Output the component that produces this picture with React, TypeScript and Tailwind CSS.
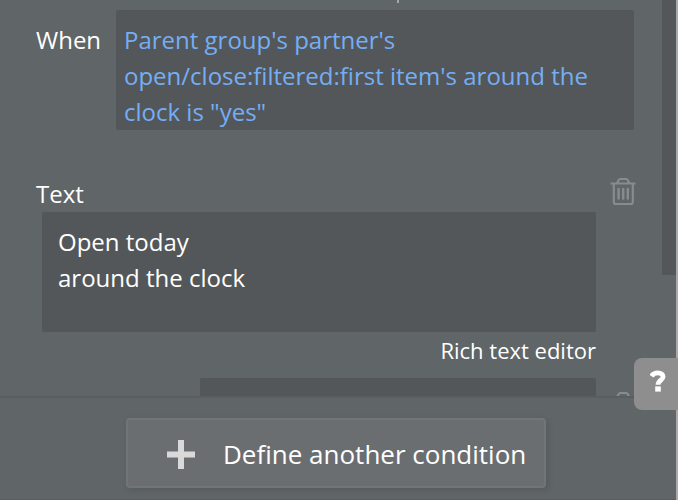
const fieldClass = "bg-[#535759] rounded-[2px]";

function TrashIcon() {
  return (
    <svg className="w-[26px] h-[30px] shrink-0" viewBox="0 0 26 30" fill="none" stroke="#878c8e">
      <path strokeWidth={2.2} d="M0.500 7.500h25M7.200 7l1.500-3Q9.200 3 10.200 3h6q1 0 1.500 1L19.200 7" />
      <path strokeWidth={2.2} d="M3.800 7.500v18.500q0 2 2 2h15q2 0 2-2V7.500" />
      <path strokeWidth={2.4} strokeLinecap="round" d="M8.600 13v9.500M13.200 13v9.500M17.800 13v9.500" />
    </svg>
  );
}

function PlusIcon() {
  return (
    <svg className="w-7 h-[29px] shrink-0" viewBox="0 0 28 29" fill="#d9d9d9">
      <path d="M11 0h6v11.500h11v6H17V29h-6V17.500H0v-6h11z" />
    </svg>
  );
}

function HelpButton() {
  return (
    <button
      aria-label="Help"
      className="absolute right-0 top-[358px] w-11 h-[52px] rounded-l-lg bg-[#8e8e8e] flex justify-center pt-3"
    >
      <svg className="w-4 h-[22px] ml-[3px]" viewBox="0 0 16 22" fill="none" stroke="#ffffff">
        <path strokeWidth={4.8} d="M1.500 6.200C2.800 3.900 5 2.800 7.800 2.800c3.200 0 5.300 1.500 5.300 3.900C13.100 10 8 10.200 8 14.800" />
        <path strokeWidth={5.600} d="M8 16.400v5.200" />
      </svg>
    </button>
  );
}

export default function App() {
  return (
    <div className="relative flex w-[678px] h-[500px] overflow-hidden bg-[#606568] font-['Open_Sans',sans-serif] text-white">
      <div className="w-[676px] flex flex-col">
        {/* Scrolling list of conditions */}
        <div className="flex h-[396px] overflow-hidden">
          <div className="w-[662px] shrink-0">
            {/* Tail of the row that is scrolled out of view */}
            <div className="h-[10px] pl-[397px]">
              <div className="w-[2px] h-[3px] bg-[#a5a8aa]" />
            </div>

            <div className="flex pl-9 text-2xl leading-9">
              <div className="w-20 pt-3">When</div>
              <div className={`${fieldClass} w-[518px] h-[120px] pt-3 pl-2 text-[#75aef4]`}>
                Parent group's partner's
                <br />
                open/close:filtered:first item's around the
                <br />
                clock is "yes"
              </div>
            </div>

            <div className="flex justify-between h-[36px] mt-[46px] pl-9 pr-[26px]">
              <div className="text-2xl leading-9">Text</div>
              <TrashIcon />
            </div>
            <div className={`${fieldClass} ml-[42px] w-[554px] h-[120px] pt-3 pl-4 text-2xl leading-9`}>
              Open today
              <br />
              around the clock
            </div>
            <div className="w-[596px] h-[46px] text-right text-[22px] leading-9">Rich text editor</div>

            <div className="flex justify-between items-start pl-[200px] pr-[26px]">
              <div className={`${fieldClass} w-[396px] h-12`} />
              <div className="pt-3">
                <TrashIcon />
              </div>
            </div>
          </div>
          <div className="w-[14px] h-[275px] bg-[#535759]" />
        </div>

        <div className="flex-1 border-t-2 border-t-[#5a5e60] border-b border-b-[#595d5f] pl-[126px] pt-5">
          <button className="flex items-center w-[420px] h-[70px] pl-[39px] pt-[3px] rounded bg-[#6a6e70] border-2 border-[#717578] shadow-[2px_2px_6px_rgba(0,0,0,0.12)]">
            <PlusIcon />
            <span className="ml-7 pb-[2px] text-[26px] leading-9 whitespace-nowrap">Define another condition</span>
          </button>
        </div>
      </div>
      <div className="w-[2px] bg-[#a9a9a9]" />
      <HelpButton />
    </div>
  );
}
